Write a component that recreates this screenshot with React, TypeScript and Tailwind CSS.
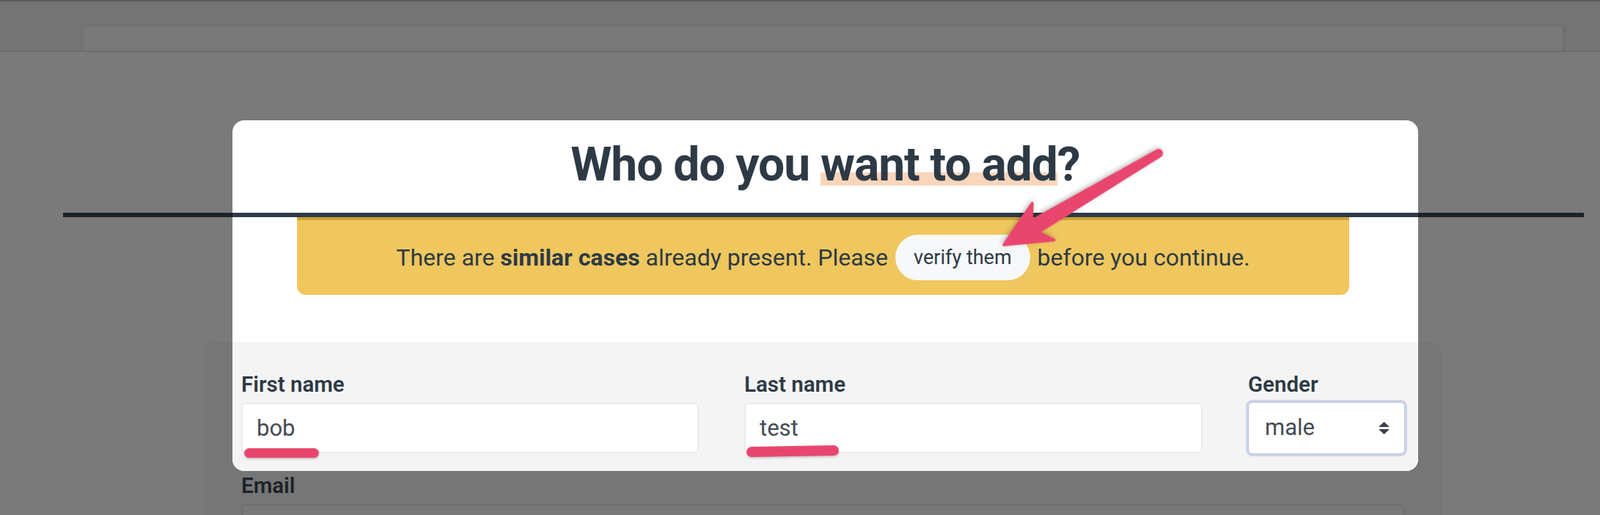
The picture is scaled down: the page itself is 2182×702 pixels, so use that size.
import React from 'react';

const NameRow = ({ dim = false }: { dim?: boolean }) => {
  const label = dim ? 'text-[#1c2328]' : 'text-[#2d3a45]';
  const input = dim ? 'border-[#6f6f6f] bg-[#797979] text-[#3a3d40]' : 'border-[#ebebeb] bg-white text-[#454b53]';

  return (
    <div className="grid grid-cols-[624px_625px_214px] gap-x-[62px]">
      <div>
        <label className={`block text-[29.5px] leading-[36px] font-semibold ${label}`}>First name</label>
        <div className="relative mt-[7px]">
          <input
            readOnly
            defaultValue="bob"
            className={`h-[69px] w-full rounded-[6px] border-2 pl-[19px] text-[31px] outline-none ${input}`}
          />
          {!dim && (
            <div className="absolute left-[4px] top-[62px] h-[13px] w-[102px] rounded-full bg-[#e9466f] shadow-[0_2px_3px_rgba(0,0,0,0.18)]" />
          )}
        </div>
      </div>

      <div>
        <label className={`block text-[29.5px] leading-[36px] font-semibold ${label}`}>Last name</label>
        <div className="relative mt-[7px]">
          <input
            readOnly
            defaultValue="test"
            className={`h-[69px] w-full rounded-[6px] border-2 pl-[19px] text-[31px] outline-none ${input}`}
          />
          {!dim && (
            <div className="absolute left-[3px] top-[59px] h-[14px] w-[126px] -rotate-1 rounded-full bg-[#e9466f] shadow-[0_2px_3px_rgba(0,0,0,0.18)]" />
          )}
        </div>
      </div>

      <div>
        <label className={`block text-[29.5px] leading-[36px] font-semibold ${label}`}>Gender</label>
        <div
          className={`mt-[6px] flex h-[71px] items-center justify-between rounded-[6px] border pl-[22px] pr-[20px] text-[31px] ring-3 ${
            dim ? 'border-[#6f6f6f] bg-[#797979] text-[#3a3d40] ring-[#757a85]' : 'border-[#b9c4db] bg-white text-[#454b53] ring-[#cbd4e9]'
          }`}
        >
          <span>male</span>
          <svg width="15" height="17" viewBox="0 0 15 17" fill={dim ? '#2f3236' : '#3b4048'}>
            <path d="M7.5 0 L15 7 L0 7 Z" />
            <path d="M0 10 L15 10 L7.5 17 Z" />
          </svg>
        </div>
      </div>
    </div>
  );
};

const Arrow = () => (
  <svg className="pointer-events-none absolute left-0 top-0" width="2182" height="702" viewBox="0 0 2182 702">
    <g transform="translate(1580 209) rotate(149.4)" style={{ filter: 'drop-shadow(0 2px 3px rgba(0,0,0,0.28))' }}>
      <path
        d="M0 -4 L196 -9 L183 -29 L245 0 L183 29 L196 9 L0 4 A4 4 0 0 1 0 -4 Z"
        fill="#e9466f"
        stroke="#e9466f"
        strokeWidth="4"
        strokeLinejoin="round"
      />
    </g>
  </svg>
);

export default function App() {
  return (
    <div className="relative h-[702px] w-[2182px] overflow-hidden bg-[#7a7a7a] font-['Roboto',sans-serif]">
      <header className="h-[69px] border-t-2 border-[#5d5d5d] bg-[#747474] pl-[115px] pr-[51px] pt-[34px] shadow-[0_1px_2px_rgba(0,0,0,0.18)]">
        <div className="h-[33px] bg-[#797979] shadow-[2px_0_3px_rgba(0,0,0,0.08)]" />
      </header>

      <main className="pl-[278px] pt-[397px]">
        <div className="w-[1688px] rounded-[16px] bg-[#767676] px-[51px] pb-[40px] pt-[40px]">
          <NameRow dim />
          <div className="mt-[25px]">
            <label className="block text-[29.5px] leading-[36px] font-semibold text-[#1c2328]">Email</label>
            <div className="mt-[7px] h-[69px] rounded-[6px] border-2 border-[#6f6f6f] bg-[#797979]" />
          </div>
        </div>
      </main>

      <div className="absolute left-[86px] top-[290px] h-[6px] w-[2074px] bg-[#1b2227]" />

      <section className="absolute left-[317px] top-[164px] h-[478px] w-[1617px] overflow-hidden rounded-[16px] bg-white">
        <h1 className="pt-[29px] text-center text-[64px] leading-[64px] font-bold tracking-[-1px] text-[#2d3a45]">
          Who do you{' '}
          <span className="bg-[linear-gradient(to_bottom,transparent_64%,#f9d5bb_64%,#f9d5bb_88%,transparent_88%)]">
            want to add
          </span>
          ?
        </h1>

        <div className="mt-[33px] h-[6px] bg-[#2d3a45]" />

        <div className="ml-[88px] mr-[94px] flex items-center justify-center gap-[10px] rounded-b-[12px] border-t-4 border-[#c9a13a] bg-[#f0c75e] py-[20px] text-[32px] text-[#2d3a45]">
          <span>
            There are <strong className="font-bold">similar cases</strong> already present. Please
          </span>
          <span className="flex h-[62px] items-center rounded-full bg-[#f7f8fa] px-[25px] text-[27px]">verify them</span>
          <span>before you continue.</span>
        </div>

        <div className="mt-[64px] h-[176px] bg-[#f4f4f4] px-[12px] pt-[40px]">
          <NameRow />
        </div>
      </section>

      <Arrow />
    </div>
  );
}
